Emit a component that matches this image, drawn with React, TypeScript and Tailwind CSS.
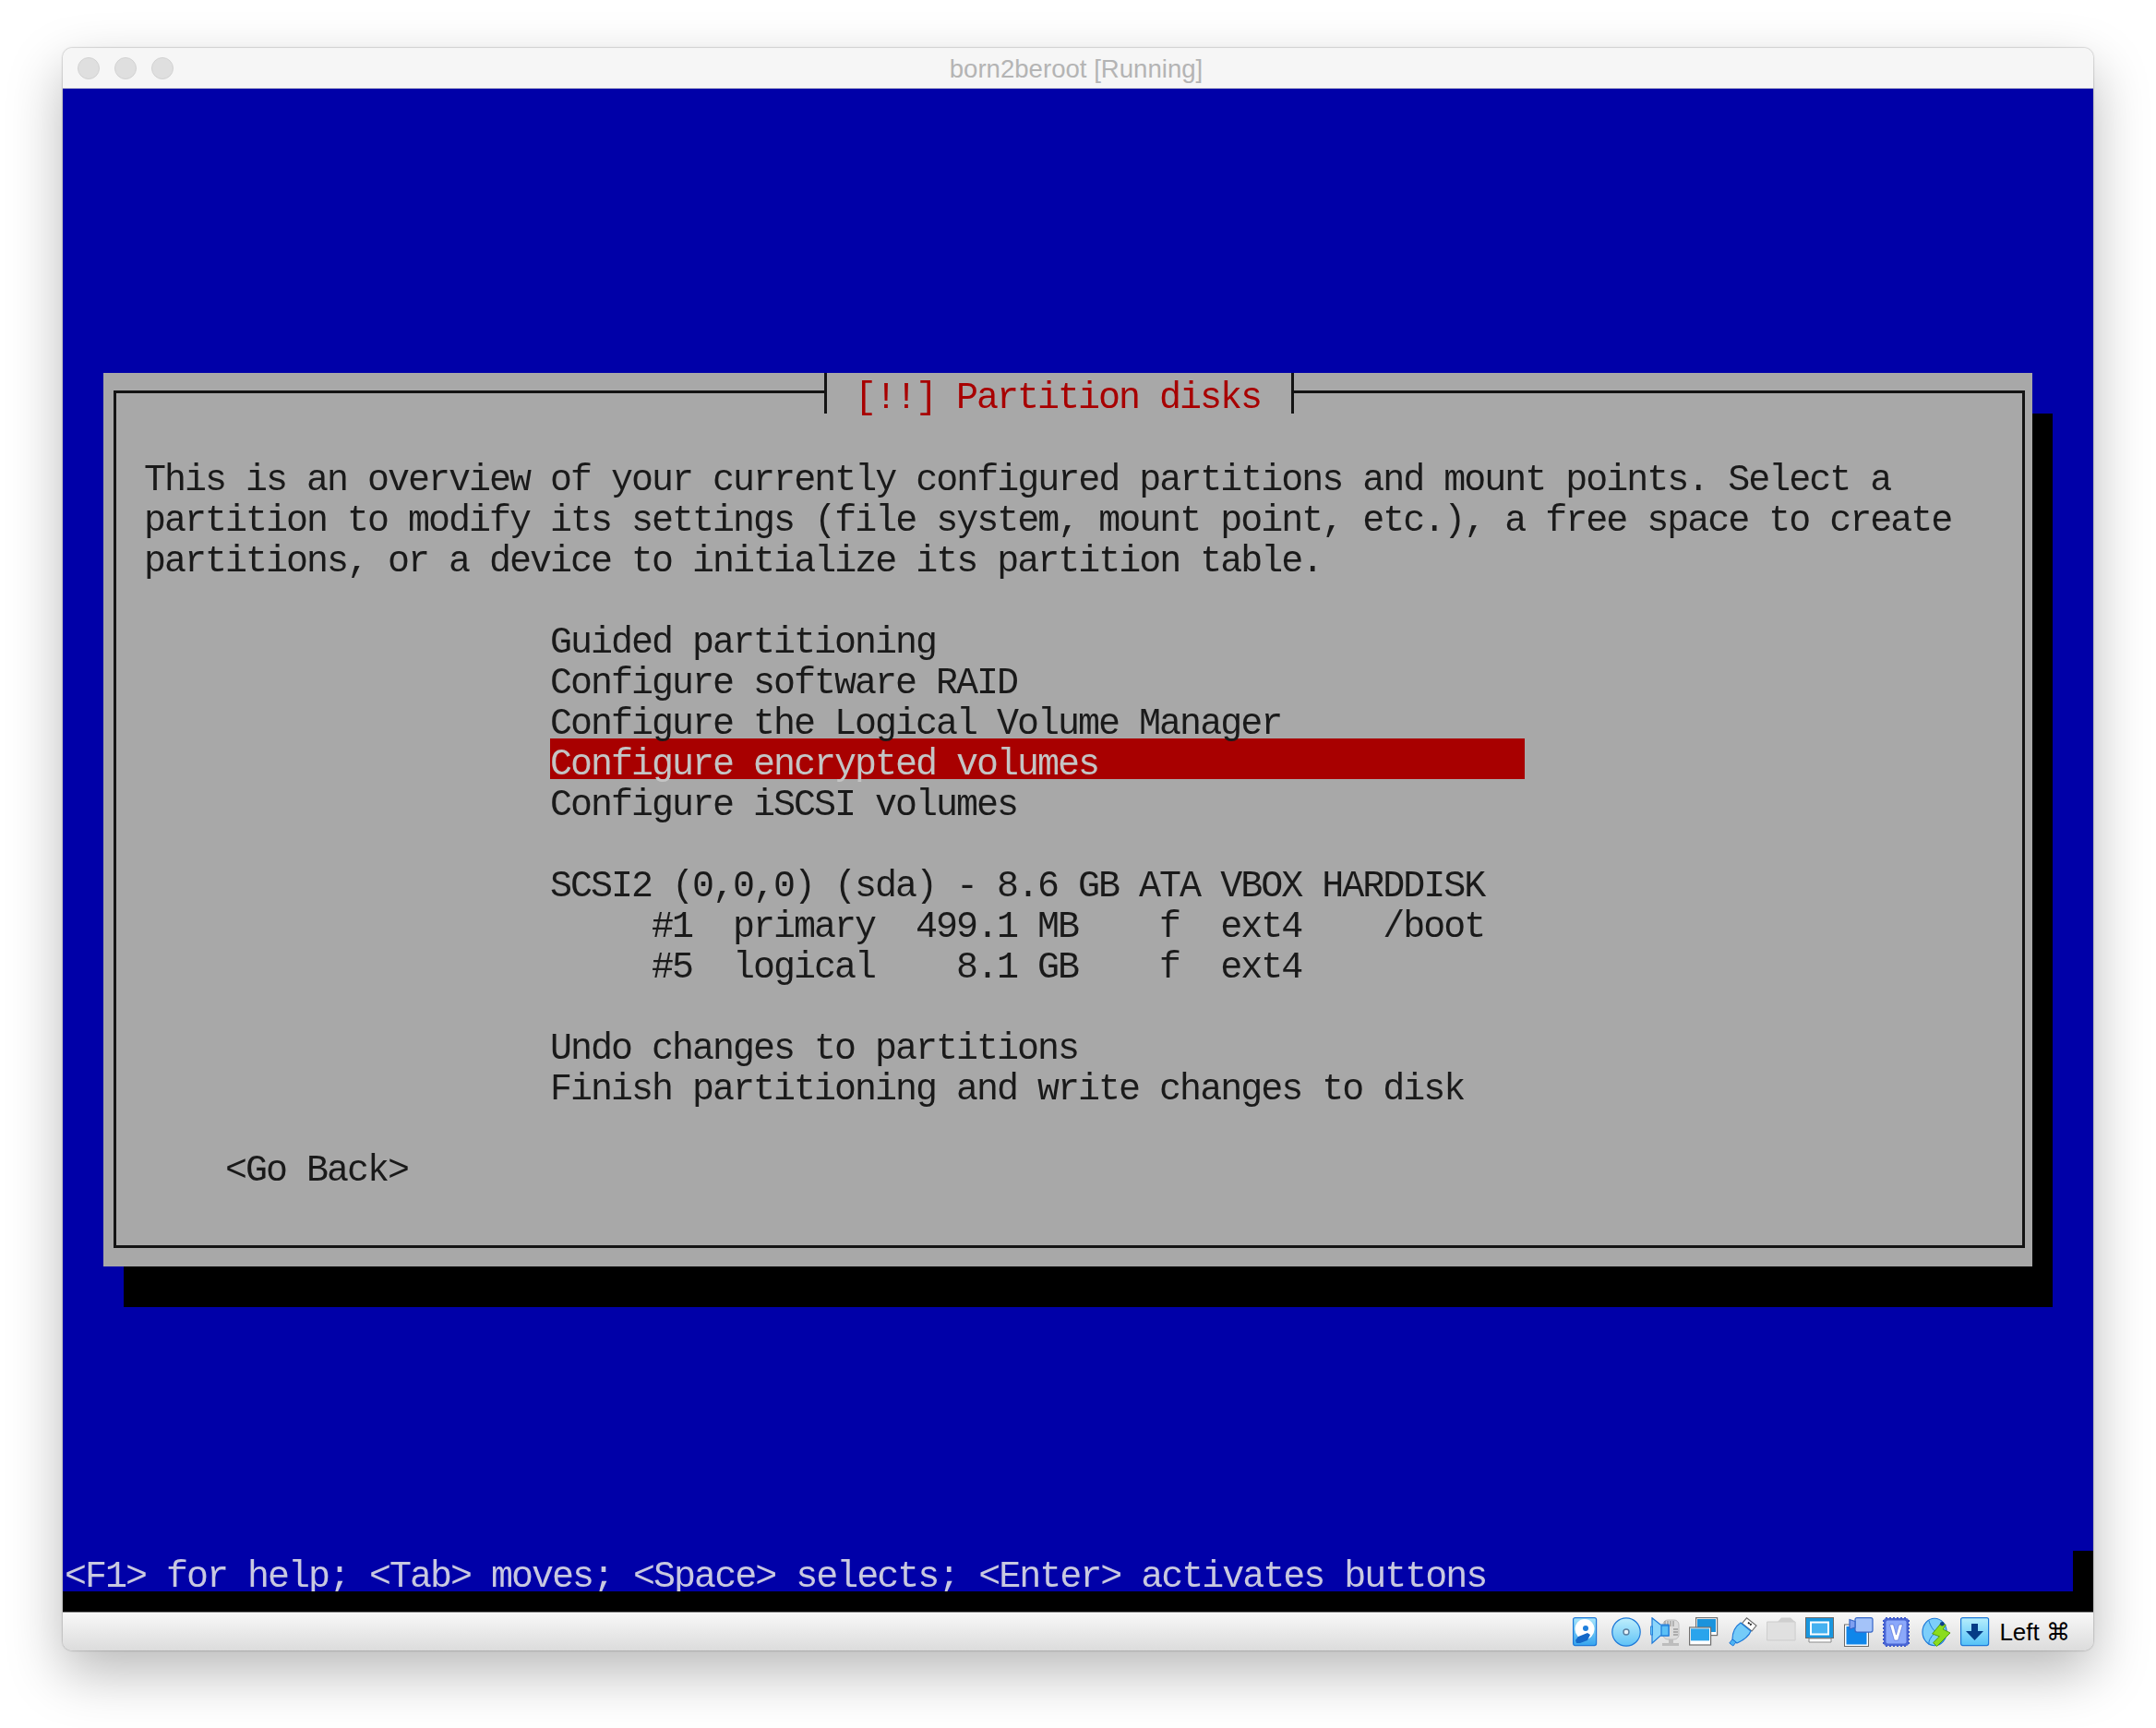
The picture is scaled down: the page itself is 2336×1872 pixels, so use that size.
const txt = "font-['Liberation_Mono',monospace]";

function HardDisk() {
  return (
    <svg width="32" height="32" viewBox="0 0 32 32">
      <defs><linearGradient id="a" x1="0" y1="0" x2="0" y2="1"><stop offset="0" stopColor="#a9e6fb" /><stop offset="1" stopColor="#35a4ee" /></linearGradient></defs>
      <rect x="0.6" y="0.6" width="25" height="30" rx="2" fill="url(#a)" stroke="#1c78d8" strokeWidth="1.2" />
      <ellipse cx="13" cy="13" rx="10.5" ry="11" fill="#fff" />
      <circle cx="14" cy="12" r="3" fill="#1f7fdc" />
      <path d="M3 25l3-4 10-4 3 2-3 6-8 3H4z" fill="#1468c8" />
    </svg>
  );
}
function Disc() {
  return (
    <svg width="32" height="32" viewBox="0 0 32 32">
      <defs><linearGradient id="b" x1="0" y1="0" x2="0" y2="1"><stop offset="0" stopColor="#bfeffc" /><stop offset="1" stopColor="#5fc2f6" /></linearGradient></defs>
      <circle cx="16" cy="16" r="15.2" fill="url(#b)" stroke="#1c78d8" strokeWidth="1.2" />
      <circle cx="16" cy="16" r="3" fill="#e8f4fb" stroke="#5b7f9f" strokeWidth="1.4" />
    </svg>
  );
}
function Audio() {
  return (
    <svg width="32" height="32" viewBox="0 0 32 32">
      <rect x="14" y="3" width="17" height="21" rx="5" fill="#dcdcdc" stroke="#bcbcbc" />
      <path d="M16 4v6M19 4v6M22 4v6M25 4v6M25 13h5M25 16h5M25 19h5" stroke="#9c9c9c" strokeWidth="1.3" />
      <path d="M20 24h5v4h-5zM13 28h18v3H13z" fill="#bdbdbd" />
      <path d="M2 0.8l9 7.2h9v12h-9l-9 8.2z" fill="#8cd6fa" stroke="#1c78d8" strokeWidth="1.2" />
      <rect x="12" y="9" width="8" height="11" fill="#5cc0f6" stroke="#1c78d8" strokeWidth="1.2" />
      <rect x="0.6" y="10" width="2" height="9" fill="#5cc0f6" stroke="#1c78d8" strokeWidth="0.8" />
    </svg>
  );
}
function Network() {
  return (
    <svg width="32" height="32" viewBox="0 0 32 32">
      <rect x="7.6" y="0.6" width="23" height="19" fill="#fff" stroke="#6f6f6f" strokeWidth="1.2" />
      <rect x="9" y="2" width="20" height="14" fill="#1b93dc" />
      <rect x="0.6" y="11" width="23" height="19" fill="#fff" stroke="#6f6f6f" strokeWidth="1.2" />
      <rect x="2" y="12.4" width="20" height="13" fill="#2aa4ec" />
    </svg>
  );
}
function Usb() {
  return (
    <svg width="32" height="32" viewBox="0 0 32 32">
      <path d="M20.5 0.8l10.5 8.2-5 6-10.5-8.4z" fill="#fff" stroke="#6a6a6a" strokeWidth="1.1" />
      <path d="M22 5.6l1.6 1.4M25.6 7l-1.4 1.6" stroke="#222" strokeWidth="1.8" />
      <path d="M14 6l11 9c-2 5-8 10-15 13l-5-4C5 17 8 10 14 6z" fill="#74cbf8" stroke="#1c78d8" strokeWidth="1.2" />
      <path d="M5 24l4 3-3.200 4-4-3z" fill="#4db3f2" stroke="#1c78d8" strokeWidth="1" />
    </svg>
  );
}
function Folder() {
  return (
    <svg width="32" height="32" viewBox="0 0 32 32">
      <path d="M12 5l4-4.500h10l5 4.500z" fill="#cfcfcf" />
      <path d="M0.600 5h30.500v20H0.600z" fill="#e0e0e0" stroke="#cdcdcd" />
    </svg>
  );
}
function Display() {
  return (
    <svg width="32" height="32" viewBox="0 0 32 32">
      <rect x="0.500" y="0.500" width="30" height="22" fill="#1996de" stroke="#6a6a6a" strokeWidth="1" />
      <rect x="6" y="5.500" width="19" height="13" fill="#45b1f0" stroke="#fff" strokeWidth="2" />
      <path d="M4 23h24v4H4z" fill="#fff" stroke="#8a8a8a" strokeWidth="1" />
    </svg>
  );
}
function Capture() {
  return (
    <svg width="32" height="32" viewBox="0 0 32 32">
      <rect x="0.500" y="8" width="26" height="23.500" fill="#fff" stroke="#6a6a6a" strokeWidth="1" />
      <rect x="2.500" y="10" width="22" height="19.500" fill="#0f86ea" />
      <rect x="12" y="0.600" width="19" height="15.500" rx="2" fill="#a4c3f9" stroke="#3566c8" strokeWidth="1.2" />
      <path d="M12 4.500l-6-2v10.500l6-2z" fill="#7f9ff0" stroke="#3566c8" strokeWidth="1.2" />
    </svg>
  );
}
function Chip() {
  return (
    <svg width="32" height="32" viewBox="0 0 32 32">
      <rect x="1" y="1" width="27" height="30" rx="3" fill="#4a66d4" />
      <path d="M0.800 3v26M28.200 3v26M3 0.800h24M3 31.200h24" stroke="#3a56c8" strokeWidth="1.600" strokeDasharray="2 2" />
      <rect x="3.500" y="3.500" width="22" height="25" rx="2" fill="#8ba8fa" />
      <path d="M7.500 8h4l3 11 3-11h4l-5 17h-4z" fill="#fff" stroke="#3a56c8" strokeWidth="0.500" />
    </svg>
  );
}
function Globe() {
  return (
    <svg width="32" height="32" viewBox="0 0 33 32">
      <ellipse cx="14.500" cy="16" rx="13.500" ry="15.200" fill="#7ccefa" stroke="#1c78d8" strokeWidth="1.200" />
      <path d="M8 3c2 6 4 11 11 15M8 30c0-5 2-8 6-12" fill="none" stroke="#1c78d8" strokeWidth="1" />
      <path d="M22 6L12 18l8 3-7 7 4 4 15-15-8-4 3-5z" fill="#8bdc1e" stroke="#4f9a10" strokeWidth="1" />
      <circle cx="23" cy="7" r="2.400" fill="#0f3f88" />
    </svg>
  );
}
function Arrow() {
  return (
    <svg width="32" height="32" viewBox="0 0 32 32">
      <defs><linearGradient id="c" x1="0" y1="0" x2="0" y2="1"><stop offset="0" stopColor="#b6eefc" /><stop offset="1" stopColor="#55c2f7" /></linearGradient></defs>
      <rect x="0.600" y="0.600" width="30" height="30" rx="2" fill="url(#c)" stroke="#1c78d8" strokeWidth="1.200" />
      <path d="M12 7h7v8h6L15.500 25 6 15h6z" fill="#053c86" />
    </svg>
  );
}

export default function App() {
  return (
    <div className="min-h-[1872px] w-[2336px] bg-white px-[68px] pt-[52px]">
      <div className="flex h-[1736px] w-[2200px] flex-col overflow-hidden rounded-[10px] shadow-[0_0_2px_rgba(0,0,0,0.45),0_24px_60px_rgba(0,0,0,0.28)]">
        <div className="relative flex h-[44px] shrink-0 items-center justify-center border-b border-[#dcdcdc] bg-[#f6f6f6]">
          <div className="absolute left-[16px] top-[10px] flex gap-[16px]">
            <span className="h-[24px] w-[24px] rounded-full border border-[#d2d2d2] bg-[#dfdfdf]" />
            <span className="h-[24px] w-[24px] rounded-full border border-[#d2d2d2] bg-[#dfdfdf]" />
            <span className="h-[24px] w-[24px] rounded-full border border-[#d2d2d2] bg-[#dfdfdf]" />
          </div>
          <span className="-ml-[4px] mt-[2px] font-['Liberation_Sans',sans-serif] text-[27.6px] text-[#b4b4b4]">born2beroot [Running]</span>
        </div>

        <div className={`flex flex-1 flex-col bg-[#0000a8] ${txt} text-[40px] leading-[44px] tracking-[-2px] whitespace-pre blur-[0.5px]`}>
          <div className="flex-1 pl-[44px] pt-[308px]">
            <div className="relative h-[968px] w-[2090px] bg-[#a8a8a8] pl-[11px] pt-[19px] shadow-[22px_44px_0_#000]">
              <div className="h-[929px] w-[2071px] border-[3px] border-[#141414] pl-[30px] pt-[73px] text-[#1a1a1a]">
                <div>This is an overview of your currently configured partitions and mount points. Select a</div>
                <div>partition to modify its settings (file system, mount point, etc.), a free space to create</div>
                <div>partitions, or a device to initialize its partition table.</div>
                <div className="ml-[440px] mt-[44px] w-[1056px]">
                  <div>Guided partitioning</div>
                  <div>Configure software RAID</div>
                  <div>Configure the Logical Volume Manager</div>
                  <div className="-mt-[7px] mb-[7px] h-[44px] bg-[#a80000] pt-[7px] text-[#c4c4c4]">Configure encrypted volumes</div>
                  <div>Configure iSCSI volumes</div>
                  <div className="mt-[44px]">SCSI2 (0,0,0) (sda) - 8.6 GB ATA VBOX HARDDISK</div>
                  <div>     #1  primary  499.1 MB    f  ext4    /boot</div>
                  <div>     #5  logical    8.1 GB    f  ext4</div>
                  <div className="mt-[44px]">Undo changes to partitions</div>
                  <div>Finish partitioning and write changes to disk</div>
                </div>
                <div className="ml-[88px] mt-[44px]">&lt;Go Back&gt;</div>
              </div>
              <div className="absolute left-[781px] top-0 h-[44px] w-[509px] border-x-[3px] border-[#141414] bg-[#a8a8a8] pl-[30px] pt-[6px] text-[#a80000]">[!!] Partition disks</div>
            </div>
          </div>
          <div className="flex h-[44px] shrink-0">
            <div className="w-[2178px] pl-[2px] pt-[7px] text-[#c8c8e0]">&lt;F1&gt; for help; &lt;Tab&gt; moves; &lt;Space&gt; selects; &lt;Enter&gt; activates buttons</div>
            <div className="flex-1 bg-black" />
          </div>
          <div className="h-[22px] shrink-0 bg-black" />
        </div>

        <div className="flex h-[42px] shrink-0 items-start justify-end gap-[10px] border-t border-[#8a8a8a] bg-gradient-to-b from-[#f8f8f8] to-[#dcdcdc] pr-[25px] pt-[5px]">
          <HardDisk /><Disc /><Audio /><Network /><Usb /><Folder /><Display /><Capture /><Chip /><Globe /><Arrow />
          <span className="font-['Liberation_Sans',sans-serif] text-[26px] leading-[33px] text-black">Left ⌘</span>
        </div>
      </div>
    </div>
  );
}
